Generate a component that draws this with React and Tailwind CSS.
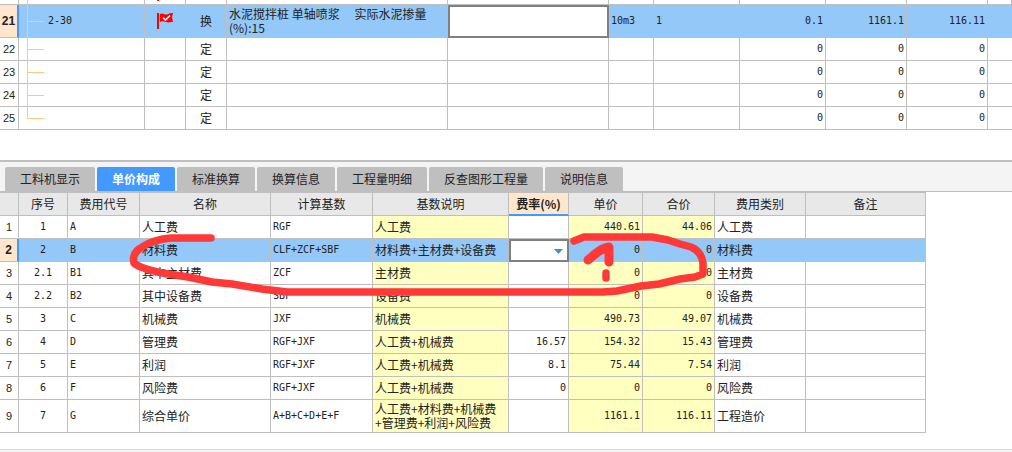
import clsx from "clsx";

const TABS = ["工料机显示", "单价构成", "标准换算", "换算信息", "工程量明细", "反查图形工程量", "说明信息"];

const ITEMS = [
  { no: 21, code: "2-30", flag: true, kind: "换", name: "水泥搅拌桩 单轴喷浆 \u3000实际水泥掺量(%):15", unit: "10m3", qty: "1", a: "0.1", b: "1161.1", c: "116.11", active: true },
  { no: 22, kind: "定", a: "0", b: "0", c: "0" },
  { no: 23, kind: "定", a: "0", b: "0", c: "0" },
  { no: 24, kind: "定", a: "0", b: "0", c: "0" },
  { no: 25, kind: "定", a: "0", b: "0", c: "0", last: true },
];

const HEADERS = ["序号", "费用代号", "名称", "计算基数", "基数说明", "费率(%)", "单价", "合价", "费用类别", "备注"];

const COSTS = [
  { seq: "1", code: "A", name: "人工费", base: "RGF", desc: "人工费", rate: "", price: "440.61", total: "44.06", type: "人工费" },
  { seq: "2", code: "B", name: "材料费", base: "CLF+ZCF+SBF", desc: "材料费+主材费+设备费", rate: "", price: "0", total: "0", type: "材料费", active: true },
  { seq: "2.1", code: "B1", name: "其中主材费", base: "ZCF", desc: "主材费", rate: "", price: "0", total: "0", type: "主材费" },
  { seq: "2.2", code: "B2", name: "其中设备费", base: "SBF", desc: "设备费", rate: "", price: "0", total: "0", type: "设备费" },
  { seq: "3", code: "C", name: "机械费", base: "JXF", desc: "机械费", rate: "", price: "490.73", total: "49.07", type: "机械费" },
  { seq: "4", code: "D", name: "管理费", base: "RGF+JXF", desc: "人工费+机械费", rate: "16.57", price: "154.32", total: "15.43", type: "管理费" },
  { seq: "5", code: "E", name: "利润", base: "RGF+JXF", desc: "人工费+机械费", rate: "8.1", price: "75.44", total: "7.54", type: "利润" },
  { seq: "6", code: "F", name: "风险费", base: "RGF+JXF", desc: "人工费+机械费", rate: "0", price: "0", total: "0", type: "风险费" },
  { seq: "7", code: "G", name: "综合单价", base: "A+B+C+D+E+F", desc: "人工费+材料费+机械费+管理费+利润+风险费", rate: "", price: "1161.1", total: "116.11", type: "工程造价", tall: true },
];

const cell = "border-r border-b border-[#bfbfbf] px-0.5 py-0 align-middle overflow-hidden";
const mono = "font-['DejaVu_Sans_Mono',monospace] text-[10px]";

function RowNo({ active, children }) {
  return (
    <th
      scope="row"
      className={clsx(
        "border-b border-[#bfbfbf] p-0 text-center font-['Liberation_Sans',sans-serif]",
        active ? "border-r-2 border-r-[#4499ff] bg-[#ffe6cc] font-bold" : "border-r bg-white text-[11px] font-normal"
      )}
    >
      {children}
    </th>
  );
}

// branch line of the tree column
function Branch({ height, last, top }) {
  const mid = Math.floor((height - 1) / 2);
  return (
    <svg width="29" height={height - 1} className="block shrink-0 overflow-visible" fill="#ffc77f" shapeRendering="crispEdges">
      <rect x="8" y="0" width="1" height={last ? mid : height} />
      {!top && <rect x="8" y={mid} width="17" height="1" />}
    </svg>
  );
}

function Flag() {
  return (
    <svg width="18" height="18" viewBox="0 0 18 18" className="ml-2.5 block">
      <path d="M0 1h2v16H0z" fill="#f00" />
      <path d="M3 2c3-2 5 2 8 0 2-1 3-1 5-1l-1 4 1 5c-3 0-4 1-7 0-3-1-4-1-6 0z" fill="#f00" />
      <path d="M6 5.5l2.5 2.5L13 3.5" stroke="#fff" strokeWidth="1.6" fill="none" />
    </svg>
  );
}

function ItemTable() {
  return (
    <table className="w-full table-fixed border-separate border-spacing-0">
      <colgroup>
        <col className="w-[19px]" />
        <col className="w-[126px]" />
        <col className="w-[41px]" />
        <col className="w-[41px]" />
        <col className="w-[221px]" />
        <col className="w-[161px]" />
        <col className="w-[45px]" />
        <col className="w-[86px]" />
        <col className="w-[86px]" />
        <col className="w-[81px]" />
        <col className="w-[81px]" />
        <col />
      </colgroup>
      <tbody>
        <tr className="h-[5px]">
          <td className={cell} />
          <td className="border-r border-b border-[#bfbfbf] p-0"><Branch height={5} top /></td>
          <td className={cell}>
            <svg width="18" height="4" className="ml-2.5 block"><path d="M0 0h2v1H0z" fill="#f00" /></svg>
          </td>
          {[0, 1, 2, 3, 4, 5, 6, 7, 8].map((i) => <td key={i} className={cell} />)}
        </tr>
        {ITEMS.map((r) => (
          <tr key={r.no} className={r.active ? "h-[33px] bg-[#93c8f8]" : "h-[23px]"}>
            <RowNo active={r.active}>{r.no}</RowNo>
            <td className="border-r border-b border-[#bfbfbf] p-0">
              <div className="flex items-center">
                <Branch height={r.active ? 33 : 23} last={r.last} />
                <span className={mono}>{r.code}</span>
              </div>
            </td>
            <td className={cell}>{r.flag && <Flag />}</td>
            <td className={clsx(cell, "text-center")}>{r.kind}</td>
            <td className={clsx(cell, "whitespace-pre-wrap break-all")}>{r.name}</td>
            {r.active ? (
              <td className="border-2 border-[#808080] bg-white p-0">
                <input aria-label="项目特征" className="block h-7 w-full px-0.5 outline-none" />
              </td>
            ) : (
              <td className={cell} />
            )}
            <td className={clsx(cell, mono)}>{r.unit}</td>
            <td className={clsx(cell, mono)}>{r.qty}</td>
            <td className={clsx(cell, mono, "text-right")}>{r.a}</td>
            <td className={clsx(cell, mono, "text-right")}>{r.b}</td>
            <td className={clsx(cell, mono, "text-right")}>{r.c}</td>
            <td className="border-b border-[#bfbfbf]" />
          </tr>
        ))}
      </tbody>
    </table>
  );
}

function RateSelect() {
  return (
    <div className="relative">
      <select aria-label="费率(%)" className="block h-[19px] w-full appearance-none bg-white outline-none">
        <option value=""></option>
      </select>
      <svg width="9" height="5" viewBox="0 0 9 5" className="pointer-events-none absolute top-2 right-1">
        <path d="M0 0h9L4.5 5z" fill="#4a90c8" />
      </svg>
    </div>
  );
}

function CostTable() {
  return (
    <table className="w-[926px] table-fixed border-separate border-spacing-0">
      <colgroup>
        <col className="w-[19px]" />
        <col className="w-[49px]" />
        <col className="w-[72px]" />
        <col className="w-[131px]" />
        <col className="w-[102px]" />
        <col className="w-[136px]" />
        <col className="w-[60px]" />
        <col className="w-[74px]" />
        <col className="w-[72px]" />
        <col className="w-[91px]" />
        <col className="w-[120px]" />
      </colgroup>
      <thead>
        <tr className="h-6 bg-[#e8e8e8]">
          <td className="border border-l-0 border-[#bfbfbf] p-0" />
          {HEADERS.map((h) => (
            <th
              key={h}
              scope="col"
              className={clsx(
                "border-t border-r border-[#bfbfbf] p-0 text-center",
                h === "费率(%)" ? "border-b-2 border-b-[#4499ff] bg-[#ffe6cc] font-bold" : "border-b font-normal"
              )}
            >
              {h}
            </th>
          ))}
        </tr>
      </thead>
      <tbody>
        {COSTS.map((r, i) => {
          const yellow = !r.active && "bg-[#ffffc0]";
          return (
            <tr key={r.seq} className={clsx(r.tall ? "h-[33px]" : "h-[23px]", r.active && "bg-[#93c8f8]")}>
              <RowNo active={r.active}>{i + 1}</RowNo>
              <td className={clsx(cell, mono, "text-center")}>{r.seq}</td>
              <td className={clsx(cell, mono)}>{r.code}</td>
              <td className={cell}>{r.name}</td>
              <td className={clsx(cell, mono)}>{r.base}</td>
              <td className={clsx(cell, yellow)}>{r.desc}</td>
              {r.active ? (
                <td className="border-2 border-[#808080] bg-white p-0"><RateSelect /></td>
              ) : (
                <td className={clsx(cell, mono, "text-right")}>{r.rate}</td>
              )}
              <td className={clsx(cell, mono, yellow, "text-right")}>{r.price}</td>
              <td className={clsx(cell, mono, yellow, "text-right")}>{r.total}</td>
              <td className={cell}>{r.type}</td>
              <td className={cell} />
            </tr>
          );
        })}
      </tbody>
    </table>
  );
}

// red pen marks over the cost table
function PenMarks() {
  return (
    <svg
      width="600"
      height="72"
      viewBox="120 228 600 72"
      className="pointer-events-none absolute top-9 left-[120px]"
      fill="none"
      stroke="#ff3838"
      strokeWidth="7.5"
      strokeLinecap="round"
      strokeLinejoin="round"
    >
      <path d="M211 238H171C158 239 147 243 139 249C133 254 133 259 134 263C140 269 152 270 162 273L188 277L212 282L232 284L262 289L287 292H603L617 291L641 286L659 284L680 279L695 277L703 274V263C702 256 698 250 691 247L680 244L668 240L652 237H584L574 241" />
      <path d="M588 260L594 255Q602 248 609 247L609 262" strokeWidth="9" />
      <path d="M606 273V278" />
    </svg>
  );
}

export default function App() {
  return (
    <div className="bg-white font-['Noto_Sans_CJK_SC',sans-serif] text-[12px] leading-[14px] text-[#222]">
      <section className="overflow-hidden pb-[30px]">
        <ItemTable />
      </section>
      <section className="border-t-2 border-[#bfbfbf]">
        <div role="tablist" className="flex gap-0.5 border-b border-[#bfbfbf] bg-[#f4f4f4] px-[5px] pt-[5px]">
          {TABS.map((t) => (
            <button
              key={t}
              type="button"
              role="tab"
              aria-selected={t === "单价构成"}
              className={clsx(
                "h-6 rounded-t-xs px-[15px] whitespace-nowrap",
                t === "单价构成" ? "bg-[#4499ff] font-bold text-white" : "bg-[#bfbfbf]"
              )}
            >
              {t}
            </button>
          ))}
        </div>
        <div className="relative overflow-hidden pb-4">
          <CostTable />
          <PenMarks />
        </div>
      </section>
      <footer className="h-[3px] border-t border-[#d9d9d9] bg-[#f4f4f4]" />
    </div>
  );
}
